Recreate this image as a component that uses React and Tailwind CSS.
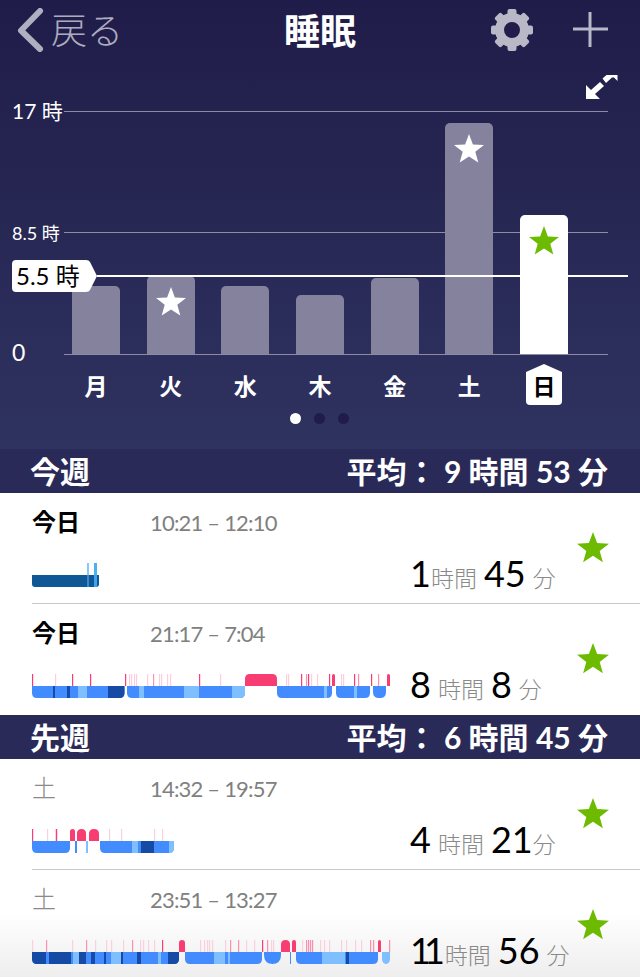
import React from "react";

const FONT = { fontFamily: "Lato, 'Noto Sans CJK JP', sans-serif" };

const BLUE = "#428cff";
const DARK = "#154aa5";
const LIGHT = "#80bfff";
const NAVY = "#0f5795";
const TICK = ["#fbd0dc", "#fa8fae", "#f73d72"];

const days = [
  { label: "月", height: 68 },
  { label: "火", height: 78, star: true },
  { label: "水", height: 68 },
  { label: "木", height: 59 },
  { label: "金", height: 76 },
  { label: "土", height: 231, star: true },
  { label: "日", height: 139, star: true, active: true },
];

const nights = {
  a: {
    bars: [
      {
        from: 32,
        to: 99,
        r: 3,
        segs: [
          [32, 99, NAVY],
          [87, 89, "#3a8ad0"],
          [94, 97, "#3fa3ee"],
        ],
      },
    ],
    ticks: [],
    topTicks: [
      [87, 2, "#8cc8f5"],
      [94, 3, "#4db0f0"],
    ],
    blocks: [],
  },
  b: {
    bars: [
      {
        from: 32,
        to: 124.5,
        segs: [
          [32, 125, BLUE],
          [53, 55, DARK],
          [67, 70, DARK],
          [78, 87, LIGHT],
          [108, 125, DARK],
        ],
      },
      {
        from: 127,
        to: 245,
        segs: [
          [127, 245, BLUE],
          [139, 144, LIGHT],
          [184, 199, LIGHT],
          [232, 245, LIGHT],
        ],
      },
      { from: 277, to: 332, segs: [[277, 332, BLUE], [324, 327, LIGHT]] },
      { from: 336, to: 370, segs: [[336, 370, BLUE], [354, 357, LIGHT]] },
      { from: 373, to: 386, r: 6, segs: [[373, 386, BLUE]] },
    ],
    ticks: [
      [32, 2], [55, 0], [72, 2], [90, 2], [125, 2], [129, 0], [131, 0], [134, 0], [136, 0],
      [147, 0], [153, 1], [159, 0], [161, 0], [167, 0], [170, 0], [199, 2], [220, 0], [286, 0],
      [288, 0], [301, 2], [306, 1], [308, 2], [311, 0], [317, 0], [329, 2], [341, 0], [343, 0],
      [354, 2], [358, 1], [371, 2], [378, 1],
    ],
    blocks: [
      [245, 277],
      [332, 335],
      [387, 390],
    ],
  },
  c: {
    bars: [
      { from: 32, to: 70, segs: [[32, 70, BLUE]] },
      { from: 100, to: 174, segs: [[100, 174, BLUE], [132, 138, LIGHT], [141, 154, DARK], [169, 174, LIGHT]] },
    ],
    floats: [
      [75, 77, BLUE],
      [86, 88, LIGHT],
    ],
    ticks: [
      [32, 2], [47, 0], [55, 0], [56, 2], [109, 0], [121, 0], [154, 0], [162, 0],
    ],
    blocks: [
      [70, 75],
      [77, 86],
      [89, 99],
    ],
  },
  d: {
    bars: [
      {
        from: 32,
        to: 179,
        segs: [
          [32, 179, BLUE],
          [32, 46, DARK],
          [49, 71, DARK],
          [73, 79, LIGHT],
          [79, 86, DARK],
          [91, 95, DARK],
          [104, 106, DARK],
          [111, 121, LIGHT],
          [121, 123, DARK],
          [137, 141, DARK],
          [158, 161, LIGHT],
          [168, 179, DARK],
        ],
      },
      { from: 185, to: 262, segs: [[185, 262, BLUE], [214, 225, LIGHT], [228, 230, LIGHT]] },
      { from: 264, to: 281, r: 9, segs: [[264, 281, BLUE]] },
      { from: 296, to: 378, segs: [[296, 378, BLUE], [322, 345, LIGHT], [346, 349, DARK]] },
      { from: 382, to: 390, segs: [[382, 390, LIGHT]] },
    ],
    floats: [[290, 291, BLUE]],
    ticks: [
      [32, 0], [46, 1], [72, 0], [86, 1], [95, 0], [106, 0], [111, 0], [123, 0], [132, 1],
      [140, 0], [143, 0], [148, 0], [154, 0], [162, 2], [200, 0], [204, 0], [207, 0], [209, 0],
      [212, 0], [225, 0], [230, 1], [238, 1], [246, 0], [254, 0], [262, 2], [267, 1], [271, 0],
      [273, 0], [302, 0], [306, 1], [308, 1], [310, 1], [312, 1], [320, 0], [324, 0], [329, 0],
      [341, 0], [346, 0], [355, 0], [361, 0], [370, 1], [373, 1], [389, 1],
    ],
    blocks: [
      [179, 185],
      [281, 290],
      [292, 296],
      [378, 381],
    ],
  },
};

function Star({ size, color }) {
  return (
    <svg width={size} height={size} viewBox="0 0 32 32">
      <polygon
        fill={color}
        points="16,1 19.9,11.4 31,11.9 22.3,18.8 25.3,29.5 16,23.4 6.7,29.5 9.7,18.8 1,11.9 12.1,11.4"
      />
    </svg>
  );
}

function Gear() {
  const teeth = [];
  for (let i = 0; i < 8; i++) {
    teeth.push(
      <rect key={i} x="17.500" y="1" width="9" height="9" rx="2" transform={`rotate(${i * 45} 22 22)`} />,
    );
  }
  return (
    <svg width="44" height="44" viewBox="0 0 44 44" fill="#b9b8c7">
      {teeth}
      <path
        fillRule="evenodd"
        d="M22 5a17 17 0 1 0 0 34a17 17 0 1 0 0-34zM22 14a8 8 0 1 1 0 16a8 8 0 1 1 0-16z"
      />
    </svg>
  );
}

function barPath(from, to, r) {
  const x0 = from - 32;
  const x1 = to - 32;
  return `M${x0} 12H${x1}V${24 - r}Q${x1} 24 ${x1 - r} 24H${x0 + r}Q${x0} 24 ${x0} ${24 - r}Z`;
}

function blockPath(from, to) {
  const x0 = from - 32;
  const x1 = to - 32;
  const r = Math.min(5, (to - from) / 2);
  return `M${x0} 12V${r}Q${x0} 0 ${x0 + r} 0H${x1 - r}Q${x1} 0 ${x1} ${r}V12Z`;
}

function SleepBar({ id, night }) {
  return (
    <svg width="360" height="24" viewBox="0 0 360 24" className="block shrink-0">
      {night.ticks.map(([x, level], i) => (
        <rect key={i} x={x - 32} y="0" width="1.2" height="12" fill={TICK[level]} />
      ))}
      {night.topTicks?.map(([x, w, color], i) => (
        <rect key={i} x={x - 32} y="0" width={w} height="12" fill={color} />
      ))}
      {night.blocks.map(([from, to], i) => (
        <path key={i} d={blockPath(from, to)} fill={TICK[2]} />
      ))}
      {night.floats?.map(([from, to, color], i) => (
        <rect key={i} x={from - 32} y="12" width={to - from} height="12" fill={color} />
      ))}
      {night.bars.map((bar, i) => (
        <g key={i}>
          <clipPath id={`${id}-${i}`}>
            <path d={barPath(bar.from, bar.to, bar.r ?? 5)} />
          </clipPath>
          <g clipPath={`url(#${id}-${i})`}>
            {bar.segs.map(([from, to, color], j) => (
              <rect key={j} x={from - 32} y="12" width={to - from} height="12" fill={color} />
            ))}
          </g>
        </g>
      ))}
    </svg>
  );
}

// the reference font has a narrow "1", Lato's is as wide as the other digits
function Num({ value, className }) {
  return (
    <span className={className}>
      {[...value].map((c, i) => (
        <span key={i} className={c === "1" ? "tracking-[-7px]" : ""}>
          {c}
        </span>
      ))}
    </span>
  );
}

function SectionHeader({ title, hours, minutes }) {
  return (
    <div className="flex h-[44px] items-center justify-between bg-[#2a2a59] pl-[30px] pr-8 text-white">
      <span className="text-[30px] font-bold">{title}</span>
      <span className="whitespace-nowrap text-[30px] font-bold">
        平均： {hours} 時間 {minutes} 分
      </span>
    </div>
  );
}

function SleepRow({ id, day, muted, time, hours, minutes, night, last }) {
  return (
    <div className={`ml-8 flex h-[111px] ${last ? "" : "border-b border-[#c8c8cc]"}`}>
      <div className="min-w-0 flex-1">
        <div className="flex h-[58px] items-center">
          <span
            className={`w-[118px] text-[24px] ${muted ? "font-light text-[#8a8a8a]" : "font-semibold text-black"}`}
          >
            {day}
          </span>
          <span className="text-[22px] tracking-[-0.8px] text-[#808080]">{time}</span>
        </div>
        <div className="mt-[12px] flex h-[24px] items-center">
          <SleepBar id={id} night={night} />
          <div className="ml-[18px] flex items-baseline whitespace-nowrap text-[#8a8a8a]">
            <Num value={hours} className="text-[36px] leading-[36px] text-black" />
            <span className="ml-[7px] text-[23px] font-light leading-[36px]">時間</span>
            <Num value={minutes} className="ml-[7px] text-[36px] leading-[36px] text-black" />
            <span className="ml-[7px] text-[23px] font-light leading-[36px]">分</span>
          </div>
        </div>
      </div>
      <div className="flex w-[86px] justify-center pr-2 pt-[38px]">
        <Star size={34} color="#6cbb00" />
      </div>
    </div>
  );
}

export default function App() {
  return (
    <div style={FONT} className="relative h-[977px] w-[640px] overflow-hidden bg-white">
      <div className="h-[449px] bg-gradient-to-b from-[#201c49] to-[#2f3360]">
        {/* top bar */}
        <div className="relative flex h-[62px] items-center justify-center">
          <div className="absolute left-[15px] top-[8px] flex items-center">
            <svg width="30" height="44" viewBox="0 0 30 44" fill="none">
              <path d="M25 3L6 22.500L25 41" stroke="#b0afc1" strokeWidth="6" strokeLinecap="round" strokeLinejoin="round" />
            </svg>
            <span className="ml-[6px] text-[36px] font-light leading-[44px] text-[#adacbe]">戻る</span>
          </div>
          <span className="text-[36px] font-bold text-white">睡眠</span>
          <div className="absolute left-[490px] top-[8px]">
            <Gear />
          </div>
          <div className="absolute left-[573px] top-[12px]">
            <svg width="36" height="36" viewBox="0 0 36 36" stroke="#b9b8c7" strokeWidth="3">
              <path d="M17 0V35M0 17H35" />
            </svg>
          </div>
        </div>

        {/* chart canvas */}
        <div className="relative h-[387px]">
          <svg className="absolute left-[585px] top-[12px]" width="34" height="28" viewBox="0 0 34 28" fill="white">
            <path d="M1 11V25H15L10 20L19 12L15 8L6 16Z" />
            <path d="M17.500 4.500L21.500 1H32.500V7L29 3.500H27L21 9Z" />
          </svg>

          <div className="absolute left-[64px] top-[49px] h-px w-[544px] bg-[#8c8aa4]" />
          <div className="absolute left-[64px] top-[170px] h-px w-[544px] bg-[#8c8aa4]" />
          <div className="absolute left-[64px] top-[292px] h-px w-[544px] bg-[#8c8aa4]" />

          <span className="absolute left-[12px] top-[34px] text-[21px] leading-[30px] text-white">17 時</span>
          <span className="absolute left-[12px] top-[158px] text-[18px] leading-[26px] text-white">8.5 時</span>
          <span className="absolute left-[12px] top-[275px] text-[23px] leading-[30px] text-white">0</span>

          {/* bars */}
          <div className="absolute left-[72px] top-0 flex h-[292px] w-[496px] items-end justify-between">
            {days.map((d) => (
              <div
                key={d.label}
                style={{ height: d.height }}
                className={`flex w-[48px] justify-center rounded-t-[5px] pt-[10px] ${d.active ? "bg-white" : "bg-[#85829e]"}`}
              >
                {d.star && <Star size={32} color={d.active ? "#6cbb00" : "#ffffff"} />}
              </div>
            ))}
          </div>

          {/* average line */}
          <div className="absolute left-[97px] top-[213px] h-[2px] w-[531px] bg-white" />
          <div className="absolute left-[12px] top-[198px] h-[32px] w-[86px]">
            <svg className="absolute inset-0" width="86" height="32" viewBox="0 0 86 32" fill="white">
              <path d="M4 0H74Q77 0 78 2L85 16L78 30Q77 32 74 32H4Q0 32 0 28V4Q0 0 4 0Z" />
            </svg>
            <span className="absolute left-[4px] top-0 whitespace-nowrap text-[24px] leading-[31px] text-black">5.5 時</span>
          </div>

          {/* weekday labels */}
          <div className="absolute left-[72px] top-[299px] flex h-[46px] w-[496px] justify-between">
            {days.map((d) => (
              <div key={d.label} className="relative flex w-[48px] items-center justify-center pt-[5px]">
                {d.active && (
                  <svg className="absolute left-[6px] top-[3px]" width="36" height="41" viewBox="0 0 36 41" fill="white">
                    <path d="M0 8L18 0L36 8V37Q36 41 32 41H4Q0 41 0 37Z" />
                  </svg>
                )}
                <span className={`relative text-[23px] font-semibold ${d.active ? "text-black" : "text-white"}`}>
                  {d.label}
                </span>
              </div>
            ))}
          </div>

          {/* page dots */}
          <div className="absolute left-[290px] top-[351px] flex gap-[13px]">
            <div className="h-[11px] w-[11px] rounded-full bg-white" />
            <div className="h-[11px] w-[11px] rounded-full bg-[#201c49]" />
            <div className="h-[11px] w-[11px] rounded-full bg-[#201c49]" />
          </div>
        </div>
      </div>

      <SectionHeader title="今週" hours="9" minutes="53" />
      <SleepRow id="a" day="今日" time="10:21 – 12:10" hours="1" minutes="45" night={nights.a} />
      <SleepRow id="b" day="今日" time="21:17 – 7:04" hours="8" minutes="8" night={nights.b} last />
      <SectionHeader title="先週" hours="6" minutes="45" />
      <SleepRow id="c" day="土" muted time="14:32 – 19:57" hours="4" minutes="21" night={nights.c} />
      <div className="h-[107px] bg-gradient-to-b from-white from-[40%] to-[#eeeeee]">
        <SleepRow id="d" day="土" muted time="23:51 – 13:27" hours="11" minutes="56" night={nights.d} last />
      </div>
    </div>
  );
}
